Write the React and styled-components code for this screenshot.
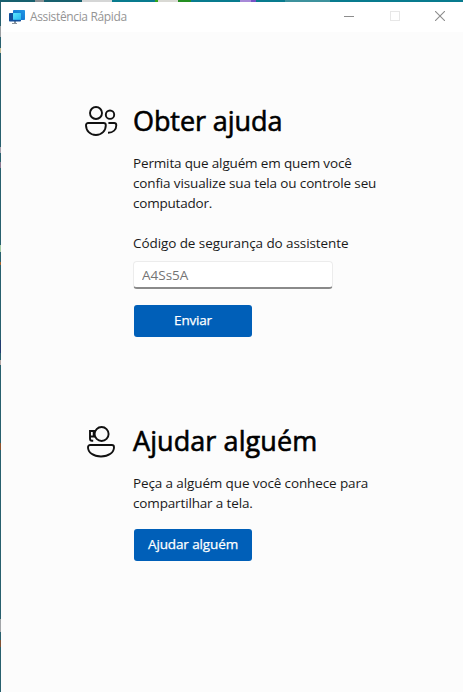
import React from "react";
import styled, { createGlobalStyle } from "styled-components";

const GlobalStyle = createGlobalStyle`
  * { box-sizing: border-box; }
  body { margin: 0; font-family: "Open Sans", "Noto Sans", sans-serif; color: #1a1a1a; }
  h1, p { margin: 0; }
`;

const Desktop = styled.div`
  height: 692px;
  padding: 2px 0 0 1px;
  background:
    linear-gradient(90deg, #17606e 35px, #8c9093 35px 44px, #17606e 44px 82px, #d5d6d6 82px 112px,
      #087b8e 112px 155px, #35a51c 155px 158px, #d9d9d4 158px 178px, #248f22 178px 191px,
      #087b8e 191px 240px, #a78ad8 240px 251px, #7652c5 251px 256px, #087b8e 256px 285px,
      #3e929d 285px 330px, #087b8e 330px) 0 0 / 100% 2px no-repeat,
    linear-gradient(#28606e 26px, #9c9fa2 26px 37px, #28606e 37px 48px, #c5bd99 48px 53px,
      #28606e 53px 147px, #a5a0ad 147px 153px, #28606e 153px 162px, #8a7890 162px 168px,
      #28606e 168px 245px, #a4cba5 245px 252px, #28606e 252px 262px, #a5622c 262px 265px,
      #28606e 265px 340px, #213b70 340px 353px, #28606e 353px 360px, #b7a7a5 360px 365px,
      #28606e 365px 443px, #90522b 443px 450px, #28606e 450px 619px, #a2a5a8 619px 632px,
      #28606e 632px 640px, #805033 640px 647px, #28606e 647px);
`;

const Window = styled.div`
  height: 100%;
  display: flex;
  flex-direction: column;
  background: #fcfcfc;
`;

const TitleBar = styled.header`
  height: 30px;
  display: flex;
  align-items: center;
  padding-left: 8px;
  background: #fff;
`;

const AppName = styled.span`
  flex: 1;
  margin: 0 0 0 5px;
  font-size: 12px;
  line-height: 16px;
  letter-spacing: -0.36px;
  color: #949494;
`;

const Controls = styled.div`
  display: flex;
`;

const WindowButton = styled.button`
  width: 45.5px;
  height: 30px;
  padding: 0 0 2px;
  border: 0;
  background: none;
  display: flex;
  align-items: center;
  justify-content: center;
  color: ${(p) => (p.disabled ? "#e7e7e7" : "#8d8d8d")};
`;

const Content = styled.main`
  display: grid;
  grid-template-rows: 320px auto;
  padding: 71px 0 0 83px;
`;

const Section = styled.section`
  display: grid;
  grid-template-columns: 49px 1fr;
`;

const SectionIcon = styled.svg`
  width: 36px;
  height: 36px;
  fill: none;
  stroke: #111;
  stroke-width: 1.9;
`;

const Body = styled.div`
  display: flex;
  flex-direction: column;
  align-items: flex-start;
`;

const Title = styled.h1`
  font-size: 27px;
  font-weight: 400;
  -webkit-text-stroke: 0.6px #000;
  line-height: 36px;
  letter-spacing: ${(p) => p.$spacing}px;
  color: #000;
  white-space: nowrap;
`;

const Description = styled.p`
  margin-top: 14px;
  font-size: 13.5px;
  line-height: 20px;
`;

const Line = styled.span`
  display: block;
  white-space: nowrap;
  letter-spacing: ${(p) => p.$spacing}px;
`;

const Label = styled.label`
  margin-top: 20px;
  font-size: 13.5px;
  line-height: 20px;
`;

const CodeInput = styled.input`
  width: 200px;
  height: 28px;
  margin-top: 8px;
  padding: 0 8px;
  border: 1px solid #ececec;
  border-bottom: 2px solid #8a8a8a;
  border-radius: 4px;
  background: #fff;
  font: 13.5px "Open Sans", "Noto Sans", sans-serif;
  letter-spacing: 0;
  outline: none;
  &::placeholder { color: #747474; opacity: 1; }
`;

const PrimaryButton = styled.button`
  width: 118px;
  height: 32px;
  margin: 16px 0 0 1px;
  padding: 0 0 2px;
  border: 0;
  border-radius: 3px;
  background: #005fb8;
  color: #fff;
  font: 400 13.5px "Open Sans", "Noto Sans", sans-serif;
  -webkit-text-stroke: 0.25px #fff;
  letter-spacing: ${(p) => p.$spacing}px;
  white-space: nowrap;
`;

function AppLogo() {
  return (
    <svg width="16" height="16" viewBox="0 0 16 16">
      <defs>
        <linearGradient id="screen" x1="0" y1="1" x2="1" y2="0">
          <stop offset="0" stopColor="#0b69c7" />
          <stop offset="1" stopColor="#2098e6" />
        </linearGradient>
        <linearGradient id="overlap" x1="0" y1="0" x2="1" y2="1">
          <stop offset="0" stopColor="#5ce6ff" />
          <stop offset="1" stopColor="#29b9ee" />
        </linearGradient>
      </defs>
      <path d="M5 12h2v2h1v1H3v-1h2z" fill="#8a949c" />
      <rect x="0" y="4" width="12" height="8.5" rx="0.8" fill="#12509c" />
      <rect x="4" y="1" width="12" height="10" rx="0.8" fill="url(#screen)" />
      <rect x="4" y="4" width="8" height="6.7" rx="0.5" fill="url(#overlap)" />
    </svg>
  );
}

function PeopleIcon() {
  return (
    <SectionIcon viewBox="0 0 36 36">
      <circle cx="12" cy="10" r="6" />
      <circle cx="26" cy="11.7" r="4.2" />
      <path d="M4.2 20h15.4a2.2 2.2 0 0 1 2.2 2.2c0 5.6-4 9.8-9.9 9.8S2 27.8 2 22.2A2.2 2.2 0 0 1 4.2 20z" />
      <path d="M24.4 20h5.7a2.2 2.2 0 0 1 2.2 2.2c0 4.4-3.2 7.500-8.300 7.600" />
    </SectionIcon>
  );
}

function HelperIcon() {
  return (
    <SectionIcon viewBox="0 0 36 36">
      <circle cx="17.600" cy="11" r="7" />
      <path d="M11 8H6v5.500H11M6 13v2.500q0 2.300 2 2.300h1.200M9.700 8v5.500" />
      <path d="M6.2 22h21.600a2.200 2.200 0 0 1 2.200 2.200c0 5.300-5.200 9.300-13 9.300S4 29.500 4 24.200A2.200 2.200 0 0 1 6.200 22z" />
    </SectionIcon>
  );
}

export default function App() {
  return (
    <>
      <GlobalStyle />
      <Desktop>
        <Window>
          <TitleBar>
            <AppLogo />
            <AppName>Assistência Rápida</AppName>
            <Controls>
              <WindowButton aria-label="Minimizar">
                <svg width="10" height="10"><path d="M0 5.500h10" stroke="currentColor" /></svg>
              </WindowButton>
              <WindowButton aria-label="Maximizar" disabled>
                <svg width="10" height="10"><rect x=".5" y=".5" width="9" height="9" fill="none" stroke="currentColor" /></svg>
              </WindowButton>
              <WindowButton aria-label="Fechar">
                <svg width="10" height="10"><path d="M0 0l10 10M10 0L0 10" stroke="currentColor" strokeWidth="1.100" /></svg>
              </WindowButton>
            </Controls>
          </TitleBar>
          <Content>
            <Section>
              <PeopleIcon />
              <Body>
                <Title $spacing={-0.08}>Obter ajuda</Title>
                <Description>
                  <Line $spacing={-0.15}>Permita que alguém em quem você</Line>
                  <Line $spacing={-0.14}>confia visualize sua tela ou controle seu</Line>
                  <Line $spacing={-0.2}>computador.</Line>
                </Description>
                <Label htmlFor="code">
                  <Line $spacing={-0.08}>Código de segurança do assistente</Line>
                </Label>
                <CodeInput id="code" placeholder="A4Ss5A" />
                <PrimaryButton $spacing={-0.2}>Enviar</PrimaryButton>
              </Body>
            </Section>
            <Section>
              <HelperIcon />
              <Body>
                <Title $spacing={0.08}>Ajudar alguém</Title>
                <Description>
                  <Line $spacing={-0.12}>Peça a alguém que você conhece para</Line>
                  <Line $spacing={-0.15}>compartilhar a tela.</Line>
                </Description>
                <PrimaryButton $spacing={-0.12}>Ajudar alguém</PrimaryButton>
              </Body>
            </Section>
          </Content>
        </Window>
      </Desktop>
    </>
  );
}
